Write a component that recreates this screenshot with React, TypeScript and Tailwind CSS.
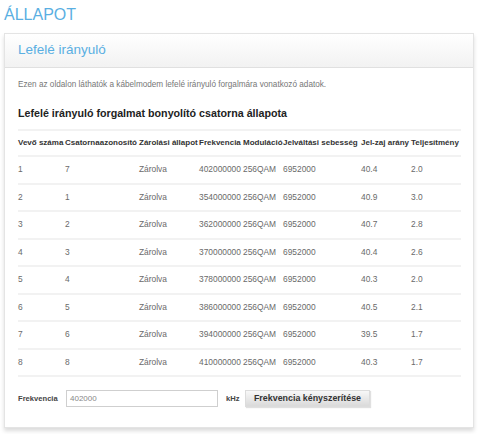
import React from "react";

const cols = [47, 74, 60, 44, 40, 78, 50, 50];
const headers = [
  "Vevő száma",
  "Csatornaazonosító",
  "Zárolási állapot",
  "Frekvencia",
  "Moduláció",
  "Jelváltási sebesség",
  "Jel-zaj arány",
  "Teljesítmény",
];
const rows: string[][] = [
  ["1", "7", "Zárolva", "402000000", "256QAM", "6952000", "40.4", "2.0"],
  ["2", "1", "Zárolva", "354000000", "256QAM", "6952000", "40.9", "3.0"],
  ["3", "2", "Zárolva", "362000000", "256QAM", "6952000", "40.7", "2.8"],
  ["4", "3", "Zárolva", "370000000", "256QAM", "6952000", "40.4", "2.6"],
  ["5", "4", "Zárolva", "378000000", "256QAM", "6952000", "40.3", "2.0"],
  ["6", "5", "Zárolva", "386000000", "256QAM", "6952000", "40.5", "2.1"],
  ["7", "6", "Zárolva", "394000000", "256QAM", "6952000", "39.5", "1.7"],
  ["8", "8", "Zárolva", "410000000", "256QAM", "6952000", "40.3", "1.7"],
];

export default function App() {
  return (
    <div className="w-[480px] h-[434px] bg-white overflow-hidden font-['Liberation_Sans',Arial,sans-serif]">
      <div className="pt-[5px] pl-[4px] h-[33px] text-[16px] leading-[20px] text-[#5aafe2]">ÁLLAPOT</div>
      <div className="ml-[4px] w-[470px] border border-[#e4e4e4] bg-white shadow-[0_3px_4px_rgba(0,0,0,0.14)]">
        <div className="h-[34px] pl-[13px] flex items-center text-[13.5px] text-[#5aafe2] bg-gradient-to-b from-white to-[#f2f2f2] border-b border-[#e0e0e0]">
          Lefelé irányuló
        </div>
        <div className="px-[13px] pt-[11px] pb-[20px]">
          <div className="text-[8.2px] leading-[12px] text-[#777]">
            Ezen az oldalon láthatók a kábelmodem lefelé irányuló forgalmára vonatkozó adatok.
          </div>
          <div className="mt-[14px] mb-[8px] text-[10.7px] leading-[16px] font-bold text-[#222]">
            Lefelé irányuló forgalmat bonyolító csatorna állapota
          </div>
          <div className="w-[443px]">
            <div className="flex h-[28px] items-center border-t-2 border-b-2 border-[#f2f2f2]">
              {headers.map((h, i) => (
                <div key={i} style={{ width: cols[i] }} className="shrink-0 text-[8px] font-bold text-[#333] whitespace-nowrap">
                  {h}
                </div>
              ))}
            </div>
            {rows.map((r, ri) => (
              <div key={ri} className="flex h-[27.5px] items-center border-b-2 border-[#f2f2f2]">
                {r.map((c, i) => (
                  <div key={i} style={{ width: cols[i] }} className="shrink-0 text-[8.4px] text-[#6a6a6a] whitespace-nowrap">
                    {c}
                  </div>
                ))}
              </div>
            ))}
          </div>
          <div className="flex items-center mt-[13px] h-[17px]">
            <div className="w-[48px] text-[7.6px] font-bold text-[#444]">Frekvencia</div>
            <div className="w-[152px] h-[17px] border border-[#cfcfcf] bg-white flex items-center pl-[3px] text-[8px] text-[#888]">
              402000
            </div>
            <div className="ml-[8px] w-[19px] text-[7.6px] font-bold text-[#444]">kHz</div>
            <div className="w-[125px] h-[17px] flex items-center justify-center border border-[#dcdcdc] bg-gradient-to-b from-[#f8f8f8] to-[#dadada] shadow-[1px_1px_1px_rgba(0,0,0,0.12)] text-[8.9px] font-bold text-[#333]">
              Frekvencia kényszerítése
            </div>
          </div>
        </div>
      </div>
    </div>
  );
}
